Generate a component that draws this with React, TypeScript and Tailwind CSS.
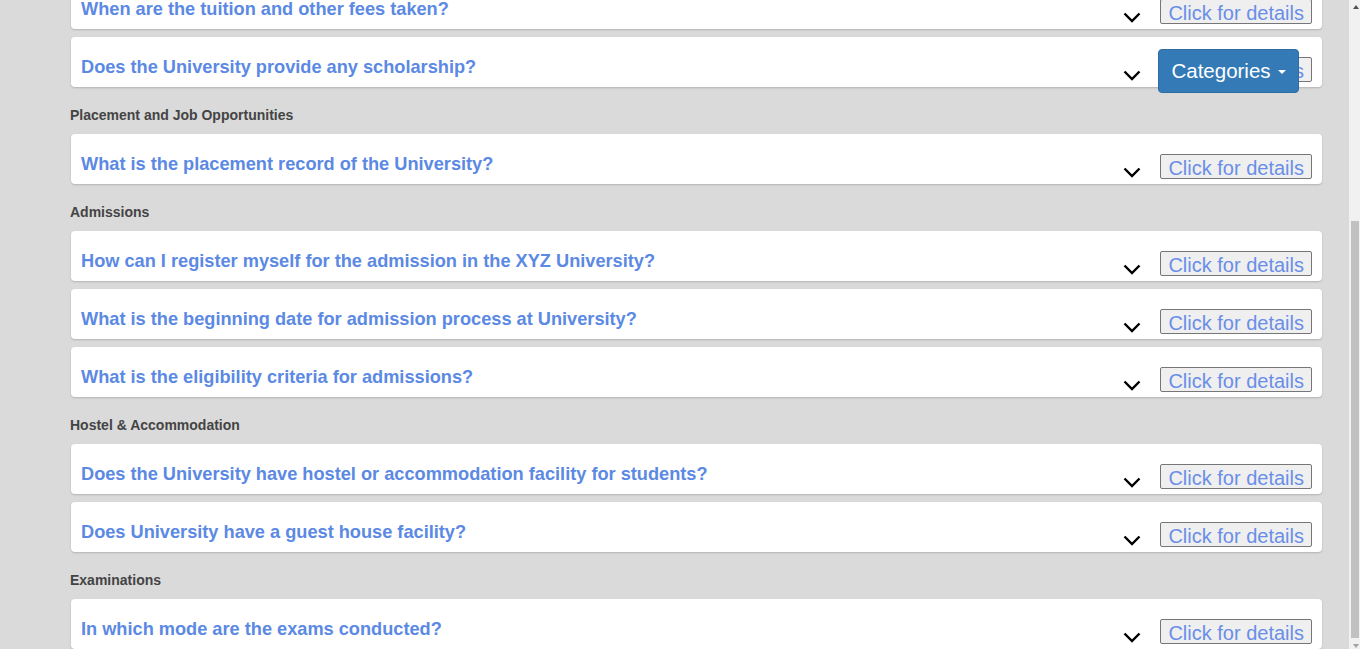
const sections = [
    {
        title: '',
        items: ['When are the tuition and other fees taken?', 'Does the University provide any scholarship?'],
    },
    {
        title: 'Placement and Job Opportunities',
        items: ['What is the placement record of the University?'],
    },
    {
        title: 'Admissions',
        items: [
            'How can I register myself for the admission in the XYZ University?',
            'What is the beginning date for admission process at University?',
            'What is the eligibility criteria for admissions?',
        ],
    },
    {
        title: 'Hostel & Accommodation',
        items: [
            'Does the University have hostel or accommodation facility for students?',
            'Does University have a guest house facility?',
        ],
    },
    {
        title: 'Examinations',
        items: ['In which mode are the exams conducted?', 'What is the passing criteria for the exams?'],
    },
];

function Chevron() {
    return (
        <svg width="18" height="11" viewBox="0 0 18 11" className="mt-[13px] shrink-0">
            <path d="M1.5 1.5 L9 9 L16.5 1.5" fill="none" stroke="#000" strokeWidth="2.4" />
        </svg>
    );
}

function FaqCard({ question }: { question: string }) {
    return (
        <div className="h-[50px] overflow-hidden bg-white rounded-[4px] shadow-[0_1px_2px_rgba(0,0,0,0.18)] pt-[20px] pl-[10px] pr-[10px] flex items-start">
            <p className="flex-1 text-[18.2px] leading-[20px] font-bold text-[#5b89e3] whitespace-nowrap">{question}</p>
            <Chevron />
            <button className="ml-[19px] h-[25px] px-[7px] pt-[2px] bg-[#efefef] border border-[#767676] rounded-[2px] text-[20px] leading-[22px] text-[#6a8ee8] whitespace-nowrap">
                Click for details
            </button>
        </div>
    );
}

export default function App() {
    return (
        <div className="h-[649px] overflow-hidden flex bg-[#dadada] font-['Liberation_Sans',Arial,sans-serif]">
            <div className="flex-1 relative">
                <div className="mt-[-21px] ml-[71px] w-[1251px]">
                    {sections.map((s, i) => (
                        <div key={i}>
                            {s.title && (
                                <h4 className="mt-[18px] mb-[9px] ml-[-1px] text-[14px] leading-[20px] font-bold text-[#444]">
                                    {s.title}
                                </h4>
                            )}
                            <div className="flex flex-col gap-[8px]">
                                {s.items.map((q) => (
                                    <FaqCard key={q} question={q} />
                                ))}
                            </div>
                        </div>
                    ))}
                </div>

                <button className="absolute top-[49px] left-[1158px] w-[141px] h-[44px] bg-[#337ab7] border border-[#2e6da4] rounded-[4px] text-white text-[20.5px] flex items-center justify-center gap-[7px]">
                    Categories
                    <span className="w-0 h-0 border-x-[4px] border-x-transparent border-t-[4px] border-t-white mt-[2px]" />
                </button>
            </div>

            {/* page scrollbar */}
            <div className="w-[11px] bg-[#f1f1f1] relative shrink-0">
                <div className="absolute top-[5px] left-[4px] w-0 h-0 border-x-[3.5px] border-x-transparent border-b-[4px] border-b-[#505050]" />
                <div className="absolute top-[221px] left-[2px] w-[8px] h-[417px] bg-[#c1c1c1]" />
                <div className="absolute top-[644px] left-[4px] w-0 h-0 border-x-[3.5px] border-x-transparent border-t-[4px] border-t-[#a3a3a3]" />
            </div>
        </div>
    );
}
